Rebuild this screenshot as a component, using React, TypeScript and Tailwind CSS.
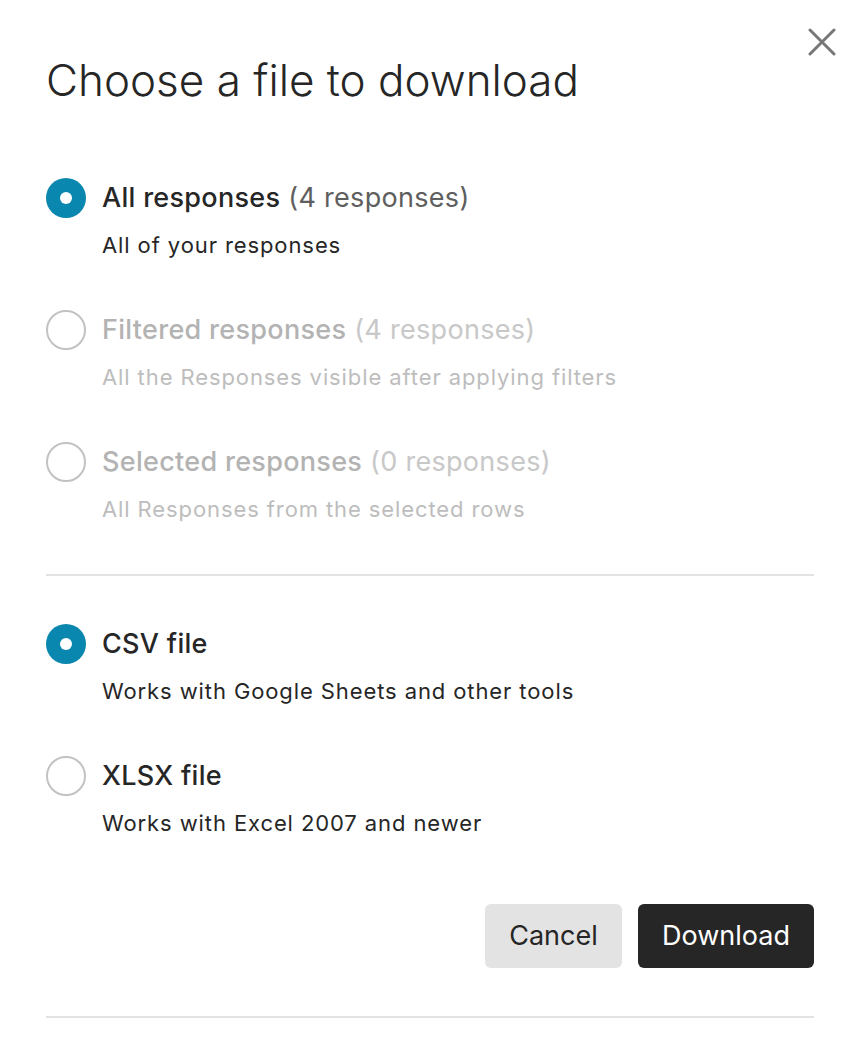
type Option = {
  title: string
  count?: string
  description: string
  checked?: boolean
  disabled?: boolean
}

const scopeOptions: Option[] = [
  { title: 'All responses', count: '(4 responses)', description: 'All of your responses', checked: true },
  { title: 'Filtered responses', count: '(4 responses)', description: 'All the Responses visible after applying filters', disabled: true },
  { title: 'Selected responses', count: '(0 responses)', description: 'All Responses from the selected rows', disabled: true },
]

const formatOptions: Option[] = [
  { title: 'CSV file', description: 'Works with Google Sheets and other tools', checked: true },
  { title: 'XLSX file', description: 'Works with Excel 2007 and newer' },
]

function Radio({ checked }: { checked?: boolean }) {
  if (checked) {
    return (
      <div className="h-10 w-10 shrink-0 rounded-full bg-[#0a87ae] flex items-center justify-center">
        <div className="h-[12px] w-[12px] rounded-full bg-white" />
      </div>
    )
  }
  return <div className="h-10 w-10 shrink-0 rounded-full border-2 border-[#c2c2c2] bg-white" />
}

function OptionRow({ option }: { option: Option }) {
  const { title, count, description, checked, disabled } = option
  return (
    <div>
      <div className="flex items-center gap-4 h-10">
        <Radio checked={checked} />
        <div className="text-[27px] leading-8 tracking-[0.3px] whitespace-nowrap">
          <span className={`font-medium ${disabled ? 'text-[#b3b3b3]' : 'text-[#262626]'}`}>{title}</span>
          {count && (
            <span className={disabled ? 'text-[#c8c8c8]' : 'text-[#5e5e5e]'}> {count}</span>
          )}
        </div>
      </div>
      <p className={`mt-3 pl-14 text-[22px] leading-[30px] tracking-[0.9px] whitespace-nowrap ${disabled ? 'text-[#bdbdbd]' : 'text-[#262626]'}`}>
        {description}
      </p>
    </div>
  )
}

export default function App() {
  return (
    <div className="relative min-h-[1052px] bg-white font-['Inter','Noto_Sans',sans-serif]">
      {/* Close */}
      <button className="absolute right-[24px] top-[28px] text-[#777777]">
        <svg width="28" height="28" viewBox="0 0 28 28" fill="none" stroke="currentColor" strokeWidth="3" strokeLinecap="round">
          <path d="M2 2L26 26M26 2L2 26" />
        </svg>
      </button>

      <div className="px-[46px] w-[860px]">
        <h1 className="pt-[54px] text-[44px] leading-[52px] font-light text-[#262626]">
          Choose a file to download
        </h1>

        <div className="mt-[72px] flex flex-col gap-[50px]">
          {scopeOptions.map((o) => (
            <OptionRow key={o.title} option={o} />
          ))}
        </div>

        <div className="mt-[50px] h-[2px] w-[768px] bg-[#e3e3e3]" />

        <div className="mt-[48px] flex flex-col gap-[50px]">
          {formatOptions.map((o) => (
            <OptionRow key={o.title} option={o} />
          ))}
        </div>

        {/* Actions */}
        <div className="mt-[66px] flex justify-end gap-4 w-[768px]">
          <button className="h-16 w-[137px] rounded-md bg-[#e3e3e3] text-[27px] text-[#262626]">
            Cancel
          </button>
          <button className="h-16 w-[176px] rounded-md bg-[#262626] text-[27px] text-white">
            Download
          </button>
        </div>

        <div className="mt-[48px] h-[2px] w-[768px] bg-[#e3e3e3]" />
      </div>
    </div>
  )
}
